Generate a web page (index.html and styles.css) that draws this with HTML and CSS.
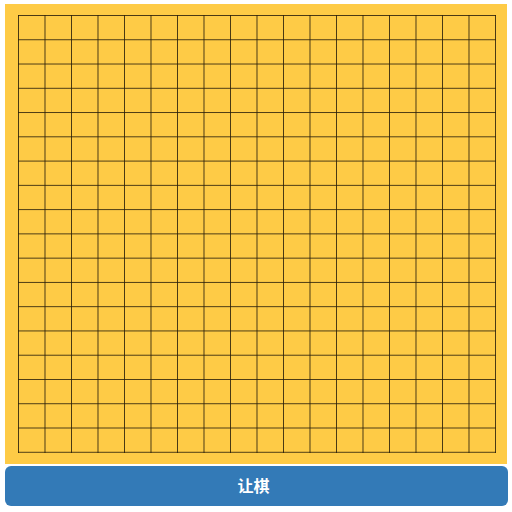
FILE: index.html
```html
<!DOCTYPE html>
<html>
<head>
<meta charset="utf-8"/>
<title>五子棋</title>
<link rel="stylesheet" href="styles.css">
</head>
<body>
<div class="game">
  <div class="board">
    <div class="grid"></div>
  </div>
  <button class="btn-primary">让棋</button>
</div>
</body>
</html>
```

FILE: styles.css
```css
body {
   margin: 0;
   background-color: white;
   font-family: "Noto Sans CJK SC", "Noto Sans", sans-serif;
}

.game {
   padding: 4px 4px 0 5px;
   display: flex;
   flex-direction: column;
   gap: 2px;
}

.board {
   width: 502px;
   height: 460px;
   box-sizing: border-box;
   padding: 11px 11px 0 13px;
   background-color: #fecb46;
}

.grid {
   width: 478px;
   height: 438px;
   background-image:
      linear-gradient(to right, rgba(40, 30, 10, 0.85) 1px, transparent 1px),
      linear-gradient(to bottom, rgba(40, 30, 10, 0.85) 1px, transparent 1px);
   background-size: 26.5px 100%, 100% 24.28px;
}

.btn-primary {
   width: 503px;
   height: 40px;
   padding: 0 6px 3px 0;
   border: none;
   border-radius: 6px;
   background-color: #337ab7;
   color: white;
   font-family: "Noto Sans CJK SC", sans-serif;
   font-size: 16px;
   font-weight: 700;
   cursor: pointer;
}
```
